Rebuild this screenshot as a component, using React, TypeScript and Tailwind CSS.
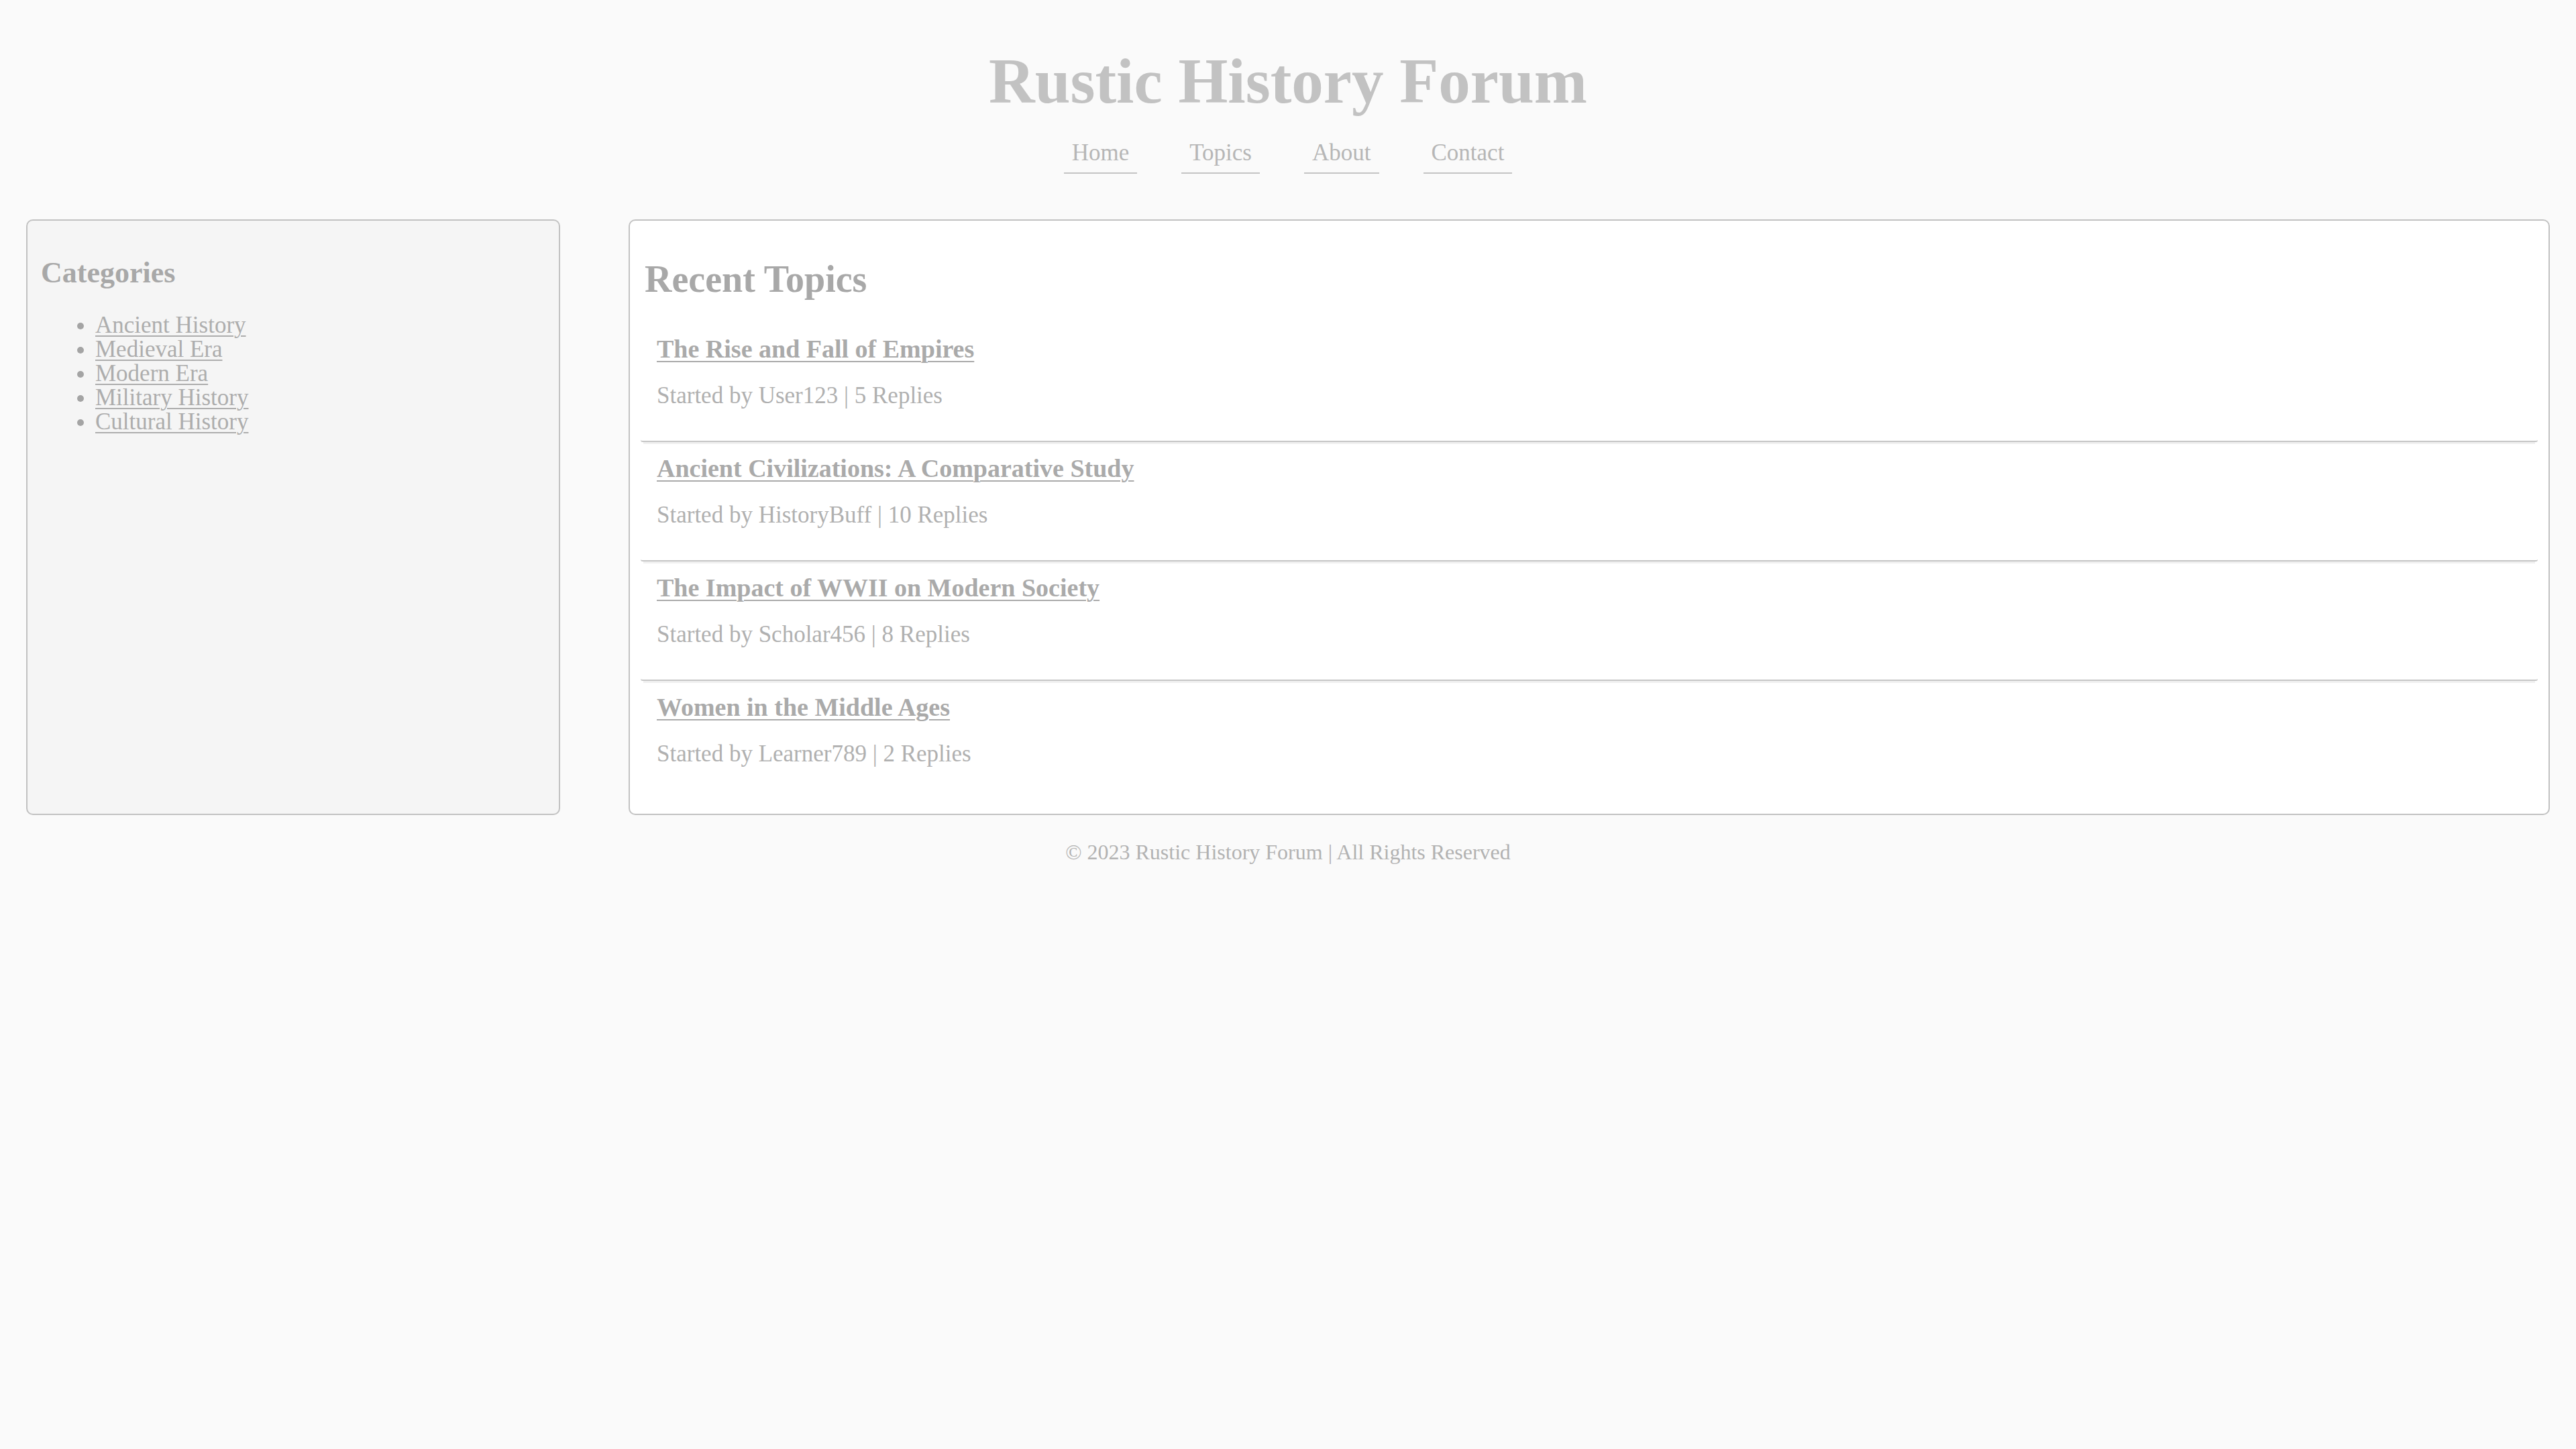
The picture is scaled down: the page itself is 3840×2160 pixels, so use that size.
import React from "react";

type Topic = {
  title: string;
  author: string;
  replies: number;
};

const navLinks = ["Home", "Topics", "About", "Contact"];

const categories = [
  "Ancient History",
  "Medieval Era",
  "Modern Era",
  "Military History",
  "Cultural History",
];

const topics: Topic[] = [
  { title: "The Rise and Fall of Empires", author: "User123", replies: 5 },
  { title: "Ancient Civilizations: A Comparative Study", author: "HistoryBuff", replies: 10 },
  { title: "The Impact of WWII on Modern Society", author: "Scholar456", replies: 8 },
  { title: "Women in the Middle Ages", author: "Learner789", replies: 2 },
];

const TopicRow = ({ topic, last }: { topic: Topic; last: boolean }) => (
  <div
    className={
      last
        ? "px-[24px] pt-[18px] pb-[47px]"
        : "px-[24px] pt-[18px] pb-[47px] border-b-2 border-[#c6c6c6] rounded-[3px] shadow-[0_7px_0_-4px_#f0f0f0]"
    }
  >
    <a
      href="#"
      className="block w-fit text-[38px] leading-[43px] font-bold text-[#aaaaaa] underline decoration-2 underline-offset-[5px]"
    >
      {topic.title}
    </a>
    <p className="mt-[28px] text-[35px] leading-[40px] text-[#b0b0b0]">
      Started by {topic.author} | {topic.replies} Replies
    </p>
  </div>
);

export default function App() {
  return (
    <div className="min-h-screen bg-[#fafafa] font-['Liberation_Serif','DejaVu_Serif',serif]">
      {/* Header */}
      <header className="pt-[67px] text-center">
        <h1 className="text-[95px] leading-[108px] font-bold text-[#c2c2c2]">
          Rustic History Forum
        </h1>
        <nav className="mt-[24px] flex justify-center gap-[66px]">
          {navLinks.map((link) => (
            <a
              key={link}
              href="#"
              className="px-[12px] py-[9px] border-b-2 border-[#c4c4c4] text-[35px] leading-[40px] text-[#b6b6b6]"
            >
              {link}
            </a>
          ))}
        </nav>
      </header>

      {/* Body */}
      <div className="mt-[68px] mx-[39px] flex justify-between items-stretch">
        <aside className="w-[796px] border-2 border-[#c2c2c2] rounded-[10px] bg-[#f5f5f5] px-[20px] pt-[20px]">
          <h2 className="mt-[34px] text-[44px] leading-[48px] font-bold text-[#a8a8a8]">
            Categories
          </h2>
          <ul className="mt-[36px] pl-[81px] list-disc marker:text-[#a4a4a4]">
            {categories.map((c) => (
              <li key={c} className="text-[35px] leading-[36px]">
                <a href="#" className="text-[#adadad] underline decoration-2 underline-offset-[4px]">
                  {c}
                </a>
              </li>
            ))}
          </ul>
        </aside>

        <main className="w-[2864px] border-2 border-[#c2c2c2] rounded-[10px] bg-white px-[16px] pt-[20px] pb-[22px]">
          <h2 className="mt-[37px] mb-[35px] pl-[6px] text-[56px] leading-[60px] font-bold text-[#a8a8a8]">
            Recent Topics
          </h2>
          {topics.map((t, i) => (
            <TopicRow key={t.title} topic={t} last={i === topics.length - 1} />
          ))}
        </main>
      </div>

      {/* Footer */}
      <footer className="mt-[37px] text-center text-[32px] leading-[36px] text-[#b2b2b2]">
        © 2023 Rustic History Forum | All Rights Reserved
      </footer>
    </div>
  );
}
